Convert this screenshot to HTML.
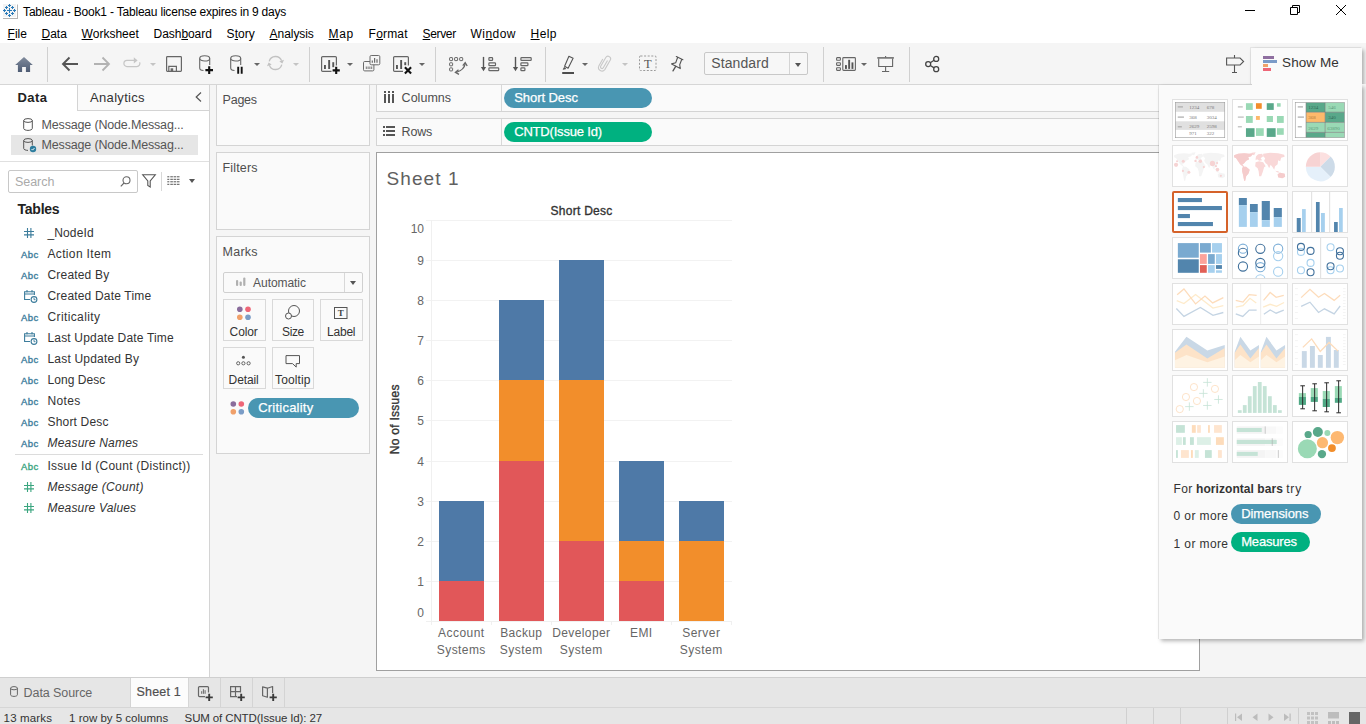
<!DOCTYPE html>
<html><head><meta charset="utf-8"><title>Tableau - Book1</title>
<style>
*{box-sizing:border-box;margin:0;padding:0}
html,body{width:1366px;height:724px;overflow:hidden;background:#fff;font-family:"Liberation Sans",sans-serif;color:#333}
.a{position:absolute}
.t{position:absolute;white-space:nowrap;line-height:1}
#titlebar{left:0;top:0;width:1366px;height:43px;background:#fff}
#toolbar{left:0;top:43px;width:1366px;height:41px;background:#f5f5f5}
#main{left:0;top:84px;width:1366px;height:593px;background:#f5f5f5}
#left{left:0;top:84px;width:210px;height:593px;background:#fff;border-right:1px solid #d4d4d4;border-top:1px solid #d4d4d4}
.card{position:absolute;background:#fafafa;border:1px solid #d4d4d4}
.ct{font-size:13px;color:#4e4e4e}
#viz{left:376px;top:152px;width:824px;height:519px;background:#fff;border:1px solid #a0a0a0}
#tabs{left:0;top:677px;width:1366px;height:30px;background:#e6e6e6;border-top:1px solid #cfcfcf}
#status{left:0;top:707px;width:1366px;height:17px;background:#e6e6e6}
#showme{left:1159px;top:85px;width:203px;height:554px;background:#fafafa;box-shadow:2px 2px 4px rgba(0,0,0,.3),-1px 0 0 rgba(0,0,0,.07)}
.pill{position:absolute;border-radius:10px;color:#fff;font-size:13px;height:20px;line-height:20px;padding-left:10.600px;white-space:nowrap;-webkit-text-stroke:0.250px #fff}
.dim{background:#4996b2}.mea{background:#00b180}
.fld{font-size:13px;color:#333}
.it{font-style:italic}
.abc{font-size:10px;color:#4e79a7;font-weight:bold;letter-spacing:-0.3px}
.th{position:absolute;width:56px;height:42px;background:#fff;border:1px solid #e1e1e1;overflow:hidden}

.mn{position:absolute;top:27px;font-size:12px;color:#000;white-space:nowrap;line-height:14px}
.mn u{text-decoration:underline;text-underline-offset:1px}
.sep{position:absolute;top:47px;width:1px;height:35px;background:#d0d0d0}
.ic{position:absolute;overflow:visible}
.dd{position:absolute;width:0;height:0;border-left:3px solid transparent;border-right:3px solid transparent;border-top:3px solid #666}
.dd.dis{border-top-color:#c4c4c4}

.f{position:absolute;left:47.500px;font-size:12px;line-height:14px;color:#333;white-space:nowrap}
.abcd,.abcm{position:absolute;left:21px;font-size:9.500px;line-height:12px;white-space:nowrap}
.abcd{color:#3d7d9c;-webkit-text-stroke:0.350px #3d7d9c}.abcm{color:#3aa57f;-webkit-text-stroke:0.350px #3aa57f}

.mb{position:absolute;width:43px;height:42px;border:1px solid #d9d9d9;background:#fafafa}
.ml{position:absolute;font-size:12px;line-height:14px;color:#333;white-space:nowrap;text-align:center}
.ax{position:absolute;font-size:12px;line-height:14px;color:#666;white-space:nowrap}
.gl{position:absolute;left:426px;width:306px;height:1px;background:#f2f2f2}
</style></head><body>
<div class="a" id="titlebar"></div>
<div class="a" id="toolbar"></div>
<!--TITLE-->
<svg class="ic" style="left:3px;top:4px" width="16" height="16" viewBox="0 0 16 16"><rect x="0" y="0" width="13" height="13" fill="#f3f3f3"></rect><path d="M14.500 0.500v14.500M0 14.500h15" stroke="#b4b4b4" stroke-width="1" fill="none"></path><g fill="#2b7bb9"><rect x="4" y="6" width="5" height="1"></rect><rect x="6" y="4" width="1" height="5"></rect><rect x="5" y="1" width="3" height="1"></rect><rect x="6" y="0" width="1" height="3"></rect><rect x="5" y="11" width="3" height="1"></rect><rect x="6" y="10" width="1" height="3"></rect><rect x="0" y="6" width="3" height="1"></rect><rect x="1" y="5" width="1" height="3"></rect><rect x="10" y="6" width="3" height="1"></rect><rect x="11" y="5" width="1" height="3"></rect><rect x="2" y="3" width="3" height="1"></rect><rect x="3" y="2" width="1" height="3"></rect><rect x="8" y="3" width="3" height="1"></rect><rect x="9" y="2" width="1" height="3"></rect><rect x="2" y="9" width="3" height="1"></rect><rect x="3" y="8" width="1" height="3"></rect><rect x="8" y="9" width="3" height="1"></rect><rect x="9" y="8" width="1" height="3"></rect></g></svg>
<div class="t" style="left: 23.1px; top: 5px; font-size: 12px; line-height: 14px; color: rgb(0, 0, 0); letter-spacing: -0.2px;">Tableau - Book1 - Tableau license expires in 9 days</div>
<svg class="ic" style="left:1240px;top:0" width="126" height="22" viewBox="0 0 126 22" fill="none" stroke="#000" stroke-width="1">
<path d="M5 10.5h10"></path>
<path d="M50.5 7.5h7v7h-7z M52.5 7.5v-2h7v7h-2"></path>
<path d="M96 5l10 10M106 5l-10 10"></path>
</svg>
<div class="mn" style="left: 7.6px; letter-spacing: -0.04px;"><u>F</u>ile</div>
<div class="mn" style="left: 41.6px; letter-spacing: -0.04px;"><u>D</u>ata</div>
<div class="mn" style="left: 81.6px; letter-spacing: 0.01px;"><u>W</u>orksheet</div>
<div class="mn" style="left: 153.6px; letter-spacing: -0.06px;">Dash<u>b</u>oard</div>
<div class="mn" style="left: 226.6px; letter-spacing: 0.03px;">S<u>t</u>ory</div>
<div class="mn" style="left: 269.6px; letter-spacing: -0.06px;"><u>A</u>nalysis</div>
<div class="mn" style="left: 328.6px; letter-spacing: 0.61px;"><u>M</u>ap</div>
<div class="mn" style="left: 368.6px; letter-spacing: 0.19px;">F<u>o</u>rmat</div>
<div class="mn" style="left: 422.6px; letter-spacing: -0.36px;"><u>S</u>erver</div>
<div class="mn" style="left: 470.6px; letter-spacing: 0.42px;">Wi<u>n</u>dow</div>
<div class="mn" style="left: 530.6px; letter-spacing: 0.38px;"><u>H</u>elp</div>

<!-- home -->
<svg class="ic" style="left:15px;top:57px" width="18" height="15" viewBox="0 0 18 15"><defs><linearGradient id="hg" x1="0" y1="0" x2="0" y2="1"><stop offset="0" stop-color="#808b9c"></stop><stop offset="1" stop-color="#4e5c74"></stop></linearGradient></defs><path d="M9 0L0.200 8h2.700V15h4.200V10h3.800V15h4.200V8h2.700z" fill="url(#hg)"></path></svg>
<div class="sep" style="left:47px"></div>
<!-- back -->
<svg class="ic" style="left:61px;top:56px" width="18" height="16" viewBox="0 0 18 16" fill="none" stroke="#555" stroke-width="1.9"><path d="M17 8H2M8.500 1.500L2 8l6.500 6.500"></path></svg>
<!-- fwd -->
<svg class="ic" style="left:93px;top:56px" width="18" height="16" viewBox="0 0 18 16" fill="none" stroke="#b2b2b2" stroke-width="1.800"><path d="M1 8h15M9.500 1.500L16 8l-6.500 6.500"></path></svg>
<!-- redo -->
<svg class="ic" style="left:123px;top:57px" width="18" height="11" viewBox="0 0 18 11" fill="none" stroke="#c6c6c6" stroke-width="1.200"><path d="M13.500 3.400H4a3.100 3.100 0 0 0 0 6.200h9.800a3.100 3.100 0 0 0 2.800-4.400"></path><path d="M10.800 0.300L14.600 3.400 10.800 6.500z" fill="#c6c6c6" stroke="none"></path></svg>
<div class="dd dis" style="left:150px;top:63px"></div>
<!-- save -->
<svg class="ic" style="left:166px;top:56px" width="16" height="16" viewBox="0 0 16 16" fill="none" stroke="#666" stroke-width="1.200"><rect x="0.600" y="0.600" width="14.800" height="14.800" rx="0.800"></rect><path d="M2.800 15.400v-5h7.600v5"></path><rect x="4.600" y="12.300" width="2.600" height="3" fill="#666" stroke="none"></rect></svg>
<!-- add ds -->
<svg class="ic" style="left:199px;top:55px" width="16" height="20" viewBox="0 0 16 20" fill="none" stroke="#666" stroke-width="1.100"><ellipse cx="5.700" cy="3.400" rx="5" ry="2.600"></ellipse><path d="M0.700 3.400v9.500c0 1.400 1.500 2.400 3.800 2.600M10.700 3.400v6.600"></path><path d="M10.200 11.300v7.600M6.400 15.100h7.600" stroke="#111" stroke-width="2.100"></path></svg>
<!-- pause ds -->
<svg class="ic" style="left:230px;top:55px" width="14" height="20" viewBox="0 0 14 20" fill="none" stroke="#666" stroke-width="1.100"><ellipse cx="5.700" cy="3.400" rx="5" ry="2.600"></ellipse><path d="M0.700 3.400v9.500c0 1.400 1.500 2.400 3.800 2.600M10.700 3.400v6.600"></path><path d="M8.200 11.800v7M11.700 11.800v7" stroke="#111" stroke-width="1.900"></path></svg>
<div class="dd" style="left:254px;top:63px"></div>
<!-- refresh -->
<svg class="ic" style="left:267px;top:55px" width="18" height="17" viewBox="0 0 18 17" fill="none" stroke="#c2c2c2" stroke-width="1.300"><path d="M2.200 6.300A6.500 6.500 0 0 1 14.600 5.800M14.800 9.700A6.500 6.500 0 0 1 2.400 10.200"></path><path d="M15.400 8.400L17 4.800 12.300 6.400zM1.600 7.600L0 11.200 4.700 9.600z" fill="#c2c2c2" stroke="none"></path></svg>
<div class="dd dis" style="left:293px;top:63px"></div>
<div class="sep" style="left:309px"></div>
<!-- new ws -->
<svg class="ic" style="left:321px;top:56px" width="20" height="19" viewBox="0 0 20 19" fill="none" stroke="#666" stroke-width="1.200"><path d="M10.500 15.400H1.600a1 1 0 0 1-1-1V1.600a1 1 0 0 1 1-1H14.400a1 1 0 0 1 1 1V9.500"></path><g fill="#555" stroke="none"><rect x="3" y="9" width="1.900" height="4"></rect><rect x="7.200" y="4" width="1.900" height="9"></rect><rect x="11.300" y="6.200" width="1.900" height="5"></rect></g><path d="M15.200 10.800v7.200M11.600 14.400h7.200" stroke="#111" stroke-width="2.100"></path></svg>
<div class="dd" style="left:347px;top:63px"></div>
<!-- duplicate -->
<svg class="ic" style="left:363px;top:55px" width="18" height="17" viewBox="0 0 18 17" fill="none" stroke="#6a6a6a" stroke-width="1"><rect x="7" y="0.500" width="9.800" height="9.300" rx="1.200"></rect><path d="M7 6.500H1.700a1.200 1.200 0 0 0-1.200 1.200v7a1.200 1.200 0 0 0 1.200 1.200h8a1.200 1.200 0 0 0 1.200-1.200V9.800"></path><path d="M9.300 7.800V5.500M11.600 7.800V3M14 7.800V4.300" stroke-width="1.200"></path><path d="M3.300 14V11.500M5.100 14V11.500M6.900 14V11.500M8.700 14V11.500" stroke-width="0.900"></path></svg>
<!-- clear -->
<svg class="ic" style="left:393px;top:56px" width="20" height="19" viewBox="0 0 20 19" fill="none" stroke="#666" stroke-width="1.200"><path d="M10 15.400H1.600a1 1 0 0 1-1-1V1.600a1 1 0 0 1 1-1H14.400a1 1 0 0 1 1 1V9.500"></path><g fill="#555" stroke="none"><rect x="3" y="9" width="1.900" height="4"></rect><rect x="7.200" y="4" width="1.900" height="9"></rect><rect x="11.300" y="6.200" width="1.900" height="3"></rect></g><path d="M11.900 11.200l6.200 6.400M18.100 11.200l-6.200 6.400" stroke="#111" stroke-width="2.100"></path></svg>
<div class="dd" style="left:419px;top:63px"></div>
<div class="sep" style="left:435px"></div>
<!-- swap -->
<svg class="ic" style="left:449px;top:57px" width="19" height="18" viewBox="0 0 19 18" fill="none" stroke="#666" stroke-width="1"><rect x="0.600" y="0.600" width="3" height="3" rx="0.500"></rect><rect x="5.600" y="0.600" width="3" height="3" rx="0.500"></rect><rect x="10.700" y="0.600" width="3" height="3" rx="0.500"></rect><rect x="0.600" y="5.800" width="3" height="3" rx="0.500"></rect><rect x="0.600" y="10.900" width="3" height="3" rx="0.500"></rect><path d="M16.200 6.500Q15.300 13 7.200 15.300" stroke-width="1.300"></path><path d="M13.800 8.600L16.200 5.600 18.200 9M9.500 12.800L6.400 15.400 10 17.400" stroke-width="1.300"></path></svg>
<!-- sort asc -->
<svg class="ic" style="left:480px;top:56px" width="20" height="16" viewBox="0 0 20 16" fill="none" stroke="#666" stroke-width="1.200"><path d="M3.500 0.900V12" stroke="#555" stroke-width="1.400"></path><path d="M0.900 11L6.100 11 3.500 15.200z" fill="#555" stroke="none"></path><rect x="8.900" y="1.700" width="3.700" height="2.700" rx="0.700"></rect><rect x="8.900" y="6.900" width="6.600" height="2.700" rx="0.700"></rect><rect x="8.900" y="11.900" width="9.800" height="2.700" rx="0.700"></rect></svg>
<!-- sort desc -->
<svg class="ic" style="left:512px;top:56px" width="20" height="16" viewBox="0 0 20 16" fill="none" stroke="#666" stroke-width="1.200"><path d="M3.500 0.900V12" stroke="#555" stroke-width="1.400"></path><path d="M0.900 11L6.100 11 3.500 15.200z" fill="#555" stroke="none"></path><rect x="8.900" y="1.700" width="10.300" height="2.700" rx="0.700"></rect><rect x="8.900" y="6.900" width="7" height="2.700" rx="0.700"></rect><rect x="8.900" y="11.900" width="4" height="2.700" rx="0.700"></rect></svg>
<div class="sep" style="left:545px"></div>
<!-- highlight -->
<svg class="ic" style="left:561px;top:55px" width="14" height="20" viewBox="0 0 14 20" fill="none" stroke="#555" stroke-width="1.100" stroke-linejoin="round"><path d="M7.900 1.300L12.100 3.300 7.100 13.200 3.600 11.200z"></path><path d="M3.200 12.300L2.100 14.400 5 13.700z" fill="#555" stroke-width="0.600"></path><path d="M1.200 18h11.800" stroke="#444" stroke-width="1.900"></path></svg>
<div class="dd" style="left:582px;top:63px"></div>
<!-- clip -->
<svg class="ic" style="left:598px;top:55px" width="14" height="18" viewBox="0 0 14 18" fill="none" stroke="#c8c8c8" stroke-width="1.100"><path d="M9.500 5.500L5.300 12.800a1.500 1.500 0 0 1-2.600-1.500L7.800 2.500a2.600 2.600 0 0 1 4.500 2.600L6.800 14.600a3.500 3.500 0 0 1-6-3.500l4-7"></path></svg>
<div class="dd dis" style="left:622px;top:63px"></div>
<!-- T box -->
<svg class="ic" style="left:639px;top:55px" width="18" height="17" viewBox="0 0 18 17" fill="none"><rect x="0.500" y="1" width="16.500" height="14.500" rx="1" stroke-dasharray="2 1.600" stroke="#9a9a9a"></rect><text x="8.800" y="13" font-family="Liberation Serif,serif" font-size="12.500" fill="#555" text-anchor="middle">T</text></svg>
<!-- pin -->
<svg class="ic" style="left:670px;top:55px" width="14" height="18" viewBox="0 0 14 18" fill="none" stroke="#555" stroke-width="1.100" stroke-linejoin="round" stroke-linecap="round"><path d="M6.300 1.600L12.900 4.800"></path><path d="M7.600 2.500L5.700 7.800 1.600 8.900 10.300 13.600 9.700 9.700 11.700 4.500"></path><path d="M5.700 11.300L3 15.900" stroke-width="1.300"></path></svg>
<!-- standard -->
<div class="a" style="left:704px;top:52px;width:104px;height:23px;border:1px solid #c8c8c8;border-radius:2px;background:#f7f7f7"></div>
<div class="a" style="left:789px;top:53px;width:1px;height:21px;background:#d4d4d4"></div>
<div class="t" style="left: 711.3px; top: 56px; font-size: 14px; color: rgb(85, 85, 85); letter-spacing: 0.08px;">Standard</div>
<div class="dd" style="left:795px;top:63px;border-left-width:3.500px;border-right-width:3.500px;border-top-width:4px;border-top-color:#555"></div>
<div class="sep" style="left:823px"></div>
<!-- show cards -->
<svg class="ic" style="left:836px;top:57px" width="20" height="14" viewBox="0 0 20 14" fill="none" stroke="#666" stroke-width="1.100"><rect x="0.600" y="0.600" width="3.800" height="2.700" rx="0.600"></rect><rect x="0.600" y="5.700" width="3.800" height="2.700" rx="0.600"></rect><rect x="0.600" y="10.700" width="3.800" height="2.700" rx="0.600"></rect><rect x="6.800" y="0.600" width="12.600" height="12.800" rx="0.800"></rect><g fill="#555" stroke="none"><rect x="9" y="8.100" width="1.900" height="3.800"></rect><rect x="12.200" y="2.800" width="1.900" height="9.100"></rect><rect x="15.500" y="5.400" width="1.900" height="6.500"></rect></g></svg>
<div class="dd" style="left:860.500px;top:63px"></div>
<!-- presentation -->
<svg class="ic" style="left:877px;top:56px" width="18" height="17" viewBox="0 0 18 17" fill="none" stroke="#666" stroke-width="1.100"><path d="M0.300 1.900h16.600" stroke-width="1.500"></path><path d="M8.600 0v1.500M1.700 2.500v8h13.900v-8M8.600 10.500v5M5 15.500h7.200"></path></svg>
<div class="sep" style="left:909px"></div>
<!-- share -->
<svg class="ic" style="left:924px;top:55px" width="16" height="18" viewBox="0 0 16 18" fill="none" stroke="#444" stroke-width="1.300"><circle cx="4.200" cy="9.100" r="2.500"></circle><circle cx="12.200" cy="3.900" r="2.500"></circle><circle cx="12.200" cy="14.200" r="2.500"></circle><path d="M6.300 7.700l3.800-2.400M6.300 10.500l3.800 2.400"></path></svg>
<!-- guide -->
<svg class="ic" style="left:1226px;top:55px" width="19" height="19" viewBox="0 0 19 19" fill="none" stroke="#555" stroke-width="1.100"><path d="M8.500 0v3M0.600 3h13.500l3.500 3.500-3.500 3.500H0.600zM8.500 10v7.500M6 17.500h5"></path></svg>
<!-- show me tab -->
<div class="a" style="left:1251px;top:48px;width:111px;height:37px;background:#fafafa;box-shadow:2px 2px 4px rgba(0,0,0,.3),-1px -1px 0 rgba(0,0,0,.06)"></div>
<div class="a" style="left:1263px;top:56px;width:11px;height:3px;background:#8f6fa0"></div>
<div class="a" style="left:1263px;top:60px;width:14px;height:3px;background:#7b9bc8"></div>
<div class="a" style="left:1263px;top:64px;width:5px;height:3px;background:#f0a26a"></div>
<div class="a" style="left:1263px;top:68px;width:8px;height:3px;background:#ee6677"></div>
<div class="t" style="left: 1282.1px; top: 56px; font-size: 13.5px; color: rgb(51, 51, 51); letter-spacing: 0.06px;">Show Me</div>

<div class="a" id="main"></div>
<div class="a" id="left"></div>

<!--LEFT-->
<div class="a" style="left:77px;top:84px;width:132px;height:27px;background:#fafafa;border-left:1px solid #d4d4d4;border-bottom:1px solid #d4d4d4"></div>
<div class="t" style="left: 17.6px; top: 90px; font-size: 13px; line-height: 15px; font-weight: bold; color: rgb(34, 34, 34); letter-spacing: 0.38px;">Data</div>
<div class="t" style="left: 90.1px; top: 90px; font-size: 13px; line-height: 15px; color: rgb(51, 51, 51); letter-spacing: 0.31px;">Analytics</div>
<svg class="ic" style="left:195px;top:92px" width="7" height="10" viewBox="0 0 7 10" fill="none" stroke="#555" stroke-width="1.200"><path d="M6 0.500L1.200 5 6 9.500"></path></svg>
<div class="a" style="left:11px;top:135px;width:187px;height:20px;background:#e6e6e6"></div>
<svg class="ic" style="left:23px;top:118px" width="10" height="13" viewBox="0 0 10 13" fill="none" stroke="#555" stroke-width="1"><ellipse cx="5" cy="2.500" rx="4.300" ry="1.900"></ellipse><path d="M0.700 2.500v8c0 1 1.900 1.900 4.300 1.900s4.300-0.900 4.300-1.900v-8"></path></svg>
<svg class="ic" style="left:23px;top:138px" width="14" height="15" viewBox="0 0 14 15" fill="none" stroke="#555" stroke-width="1"><ellipse cx="5" cy="2.500" rx="4.300" ry="1.900"></ellipse><path d="M0.700 2.500v8c0 1 1.900 1.900 4.300 1.900M9.300 2.500v5"></path><circle cx="10" cy="11" r="3.200" fill="#2d7d9e" stroke="none"></circle><path d="M8.500 11l1.100 1.100 1.900-2.100" stroke="#fff" stroke-width="0.900"></path></svg>
<div class="t" style="left: 41.6px; top: 118px; font-size: 12.5px; line-height: 14px; color: rgb(85, 85, 85); letter-spacing: -0.17px;">Message (Node.Messag...</div>
<div class="t" style="left: 41.6px; top: 138px; font-size: 12.5px; line-height: 14px; color: rgb(85, 85, 85); letter-spacing: -0.17px;">Message (Node.Messag...</div>
<div class="a" style="left:0;top:161px;width:209px;height:1px;background:#e0e0e0"></div>
<div class="a" style="left:8px;top:170px;width:130px;height:23px;border:1px solid #c8c8c8;border-radius:2px;background:#fff"></div>
<div class="t" style="left: 15.1px; top: 175px; font-size: 12.5px; line-height: 14px; color: rgb(170, 170, 170); letter-spacing: -0.07px;">Search</div>
<svg class="ic" style="left:120px;top:176px" width="11" height="11" viewBox="0 0 11 11" fill="none" stroke="#666" stroke-width="1.100"><circle cx="6.500" cy="4.300" r="3.500"></circle><path d="M4 7L0.800 10.300"></path></svg>
<svg class="ic" style="left:142px;top:174px" width="14" height="14" viewBox="0 0 14 14" fill="none" stroke="#555" stroke-width="1.100"><path d="M0.700 0.800h12.600L8.200 7v6l-2.400-1.500V7z"></path></svg>
<div class="a" style="left:161px;top:172px;width:1px;height:19px;background:#d8d8d8"></div>
<svg class="ic" style="left:167px;top:176px" width="13" height="10" viewBox="0 0 13 10" fill="none" stroke="#555" stroke-width="1"><path d="M0.300 0.800h2M0.300 3.300h2M0.300 5.800h2M0.300 8.300h2"></path><path d="M3.300 0.800h9.300M3.300 3.300h9.300M3.300 5.800h9.300M3.300 8.300h9.300" stroke-dasharray="2.600 0.700"></path></svg>
<div class="dd" style="left:189px;top:179px;border-left-width:3.500px;border-right-width:3.500px;border-top-width:4px;border-top-color:#555"></div>
<div class="t" style="left: 17.6px; top: 201px; font-size: 14px; line-height: 16px; font-weight: bold; color: rgb(34, 34, 34); letter-spacing: -0.27px;">Tables</div>
<svg class="ic" style="left:24px;top:228px" width="10" height="10" viewBox="0 0 10 10" fill="none" stroke="#3d7d9c" stroke-width="1.100"><path d="M3.500 0v10M6.900 0v10M0 3.500h10M0 6.900h10"></path></svg>
<div class="f" style="top: 225.8px; letter-spacing: 0.12px;">_NodeId</div>
<div class="abcd" style="top: 248.5px; letter-spacing: 0.38px;">Abc</div>
<div class="f" style="top: 246.8px; letter-spacing: 0.34px;">Action Item</div>
<div class="abcd" style="top: 269.5px; letter-spacing: 0.38px;">Abc</div>
<div class="f" style="top: 267.8px; letter-spacing: 0.18px;">Created By</div>
<svg class="ic" style="left:24px;top:289.5px" width="14" height="13" viewBox="0 0 14 13" fill="none" stroke="#3d7d9c" stroke-width="1.100"><path d="M6 9.500H0.600V1.700h9.800V5M0.600 4h9.800M3 0v2.500M8 0v2.500"></path><circle cx="10" cy="9.500" r="2.900"></circle><path d="M10 7.800v1.900h1.500" stroke-width="0.900"></path></svg>
<div class="f" style="top: 288.8px; letter-spacing: 0.18px;">Created Date Time</div>
<div class="abcd" style="top: 311.5px; letter-spacing: 0.38px;">Abc</div>
<div class="f" style="top: 309.8px; letter-spacing: 0.38px;">Criticality</div>
<svg class="ic" style="left:24px;top:331.5px" width="14" height="13" viewBox="0 0 14 13" fill="none" stroke="#3d7d9c" stroke-width="1.100"><path d="M6 9.500H0.600V1.700h9.800V5M0.600 4h9.800M3 0v2.500M8 0v2.500"></path><circle cx="10" cy="9.500" r="2.900"></circle><path d="M10 7.800v1.900h1.500" stroke-width="0.900"></path></svg>
<div class="f" style="top: 330.8px; letter-spacing: 0.17px;">Last Update Date Time</div>
<div class="abcd" style="top: 353.5px; letter-spacing: 0.38px;">Abc</div>
<div class="f" style="top: 351.8px; letter-spacing: 0.19px;">Last Updated By</div>
<div class="abcd" style="top: 374.5px; letter-spacing: 0.38px;">Abc</div>
<div class="f" style="top: 372.8px; letter-spacing: 0.05px;">Long Desc</div>
<div class="abcd" style="top: 395.5px; letter-spacing: 0.38px;">Abc</div>
<div class="f" style="top: 393.8px; letter-spacing: 0.37px;">Notes</div>
<div class="abcd" style="top: 416.5px; letter-spacing: 0.38px;">Abc</div>
<div class="f" style="top: 414.8px; letter-spacing: 0.18px;">Short Desc</div>
<div class="abcd" style="top: 437.5px; letter-spacing: 0.38px;">Abc</div>
<div class="f it" style="top: 435.8px; letter-spacing: 0.21px;">Measure Names</div>
<div class="a" style="left:15px;top:454px;width:188px;height:1px;background:#dcdcdc"></div>
<div class="abcm" style="top: 461px; letter-spacing: 0.38px;">Abc</div>
<div class="f" style="top: 459.3px; letter-spacing: 0.26px;">Issue Id (Count (Distinct))</div>
<svg class="ic" style="left:24px;top:482px" width="10" height="10" viewBox="0 0 10 10" fill="none" stroke="#3aa57f" stroke-width="1.100"><path d="M3.500 0v10M6.900 0v10M0 3.500h10M0 6.900h10"></path></svg>
<div class="f it" style="top: 480.3px; letter-spacing: 0.28px;">Message (Count)</div>
<svg class="ic" style="left:24px;top:503px" width="10" height="10" viewBox="0 0 10 10" fill="none" stroke="#3aa57f" stroke-width="1.100"><path d="M3.500 0v10M6.900 0v10M0 3.500h10M0 6.900h10"></path></svg>
<div class="f it" style="top: 501.3px; letter-spacing: 0.18px;">Measure Values</div>
<!--CARDS-->
<div class="card" style="left:216px;top:84px;width:154px;height:62px"></div>
<div class="card" style="left:216px;top:152px;width:154px;height:78px"></div>
<div class="card" style="left:216px;top:236px;width:154px;height:218px"></div>
<div class="card" style="left:376px;top:84px;width:986px;height:28px"></div>
<div class="card" style="left:376px;top:118px;width:986px;height:28px"></div>

<div class="t ct" style="left: 222.6px; top: 93px; font-size: 12.5px; line-height: 14px; letter-spacing: -0.25px;">Pages</div>
<div class="t ct" style="left: 222.6px; top: 161px; font-size: 12.5px; line-height: 14px; letter-spacing: 0.14px;">Filters</div>
<div class="t ct" style="left: 222.6px; top: 245px; font-size: 12.5px; line-height: 14px; letter-spacing: 0.23px;">Marks</div>
<!-- marks dropdown -->
<div class="a" style="left:223px;top:272px;width:140px;height:21px;border:1px solid #d0d0d0;border-radius:2px;background:#fafafa"></div>
<div class="a" style="left:344px;top:273px;width:1px;height:19px;background:#d8d8d8"></div>
<svg class="ic" style="left:236px;top:277px" width="10" height="10" viewBox="0 0 10 10" fill="#b0b0b0"><rect x="0" y="3" width="2.200" height="6" rx="1"></rect><rect x="3.600" y="4.500" width="2.200" height="4.500" rx="1"></rect><rect x="7.200" y="0.500" width="2.200" height="8.500" rx="1"></rect></svg>
<div class="t" style="left: 253.1px; top: 276px; font-size: 12px; line-height: 14px; color: rgb(85, 85, 85); letter-spacing: -0.06px;">Automatic</div>
<div class="dd" style="left:349.500px;top:281px;border-left-width:3.500px;border-right-width:3.500px;border-top-width:4px;border-top-color:#555"></div>
<!-- marks buttons -->
<div class="mb" style="left:223px;top:299px"></div>
<div class="mb" style="left:272px;top:299px;width:42px"></div>
<div class="mb" style="left:320px;top:299px"></div>
<div class="mb" style="left:223px;top:347px"></div>
<div class="mb" style="left:272px;top:347px;width:42px"></div>
<svg class="ic" style="left:236px;top:306px" width="16" height="15" viewBox="0 0 16 15"><circle cx="3.800" cy="3.300" r="2.800" fill="#8a6d9c"></circle><circle cx="12" cy="3.300" r="2.800" fill="#ee6677"></circle><circle cx="3.800" cy="11.200" r="2.800" fill="#f0a06a"></circle><circle cx="12" cy="11.200" r="2.800" fill="#7a9cc6"></circle></svg>
<svg class="ic" style="left:285px;top:305px" width="16" height="15" viewBox="0 0 16 15" fill="none" stroke="#555" stroke-width="1"><circle cx="9" cy="6" r="5.500"></circle><circle cx="3.500" cy="11" r="3" fill="#fafafa"></circle></svg>
<svg class="ic" style="left:334px;top:307px" width="14" height="12" viewBox="0 0 14 12" fill="none" stroke="#555" stroke-width="1"><rect x="0.500" y="0.500" width="12.500" height="11"></rect><text x="6.800" y="9.300" font-family="Liberation Serif,serif" font-size="9" font-weight="bold" fill="#444" stroke="none" text-anchor="middle">T</text></svg>
<svg class="ic" style="left:236px;top:355px" width="15" height="11" viewBox="0 0 15 11" fill="none" stroke="#555" stroke-width="0.900"><circle cx="7.400" cy="2.300" r="1.500" fill="#555" stroke="none"></circle><circle cx="2.200" cy="8.300" r="1.600"></circle><circle cx="7.400" cy="8.300" r="1.600"></circle><circle cx="12.600" cy="8.300" r="1.600"></circle></svg>
<svg class="ic" style="left:285px;top:355px" width="16" height="13" viewBox="0 0 16 13" fill="none" stroke="#555" stroke-width="1"><path d="M1 0.600h13.500v8h-3.300v3.500l-3.700-3.500H1z"></path></svg>
<div class="ml" style="left: 229.6px; top: 325px; letter-spacing: -0.1px;">Color</div>
<div class="ml" style="left: 282.1px; top: 325px; letter-spacing: -0.39px;">Size</div>
<div class="ml" style="left: 327.1px; top: 325px; letter-spacing: -0.24px;">Label</div>
<div class="ml" style="left: 228.6px; top: 373px; letter-spacing: -0.11px;">Detail</div>
<div class="ml" style="left: 275.1px; top: 373px; letter-spacing: 0.12px;">Tooltip</div>
<svg class="ic" style="left:230px;top:401px" width="15" height="14" viewBox="0 0 15 14"><circle cx="3.300" cy="3" r="2.800" fill="#8a6d9c"></circle><circle cx="11.300" cy="3" r="2.800" fill="#ee6677"></circle><circle cx="3.300" cy="10.700" r="2.800" fill="#f0a06a"></circle><circle cx="11.300" cy="10.700" r="2.800" fill="#7a9cc6"></circle></svg>
<div class="pill dim" style="left:248px;top:398px;width:111px"><span style="position: relative; left: -0.4px; letter-spacing: 0.22px;">Criticality</span></div>
<!-- shelves -->
<svg class="ic" style="left:384px;top:91px" width="10" height="12" viewBox="0 0 10 12" fill="#555"><rect x="0" y="0" width="2" height="2"></rect><rect x="4" y="0" width="2" height="2"></rect><rect x="8" y="0" width="2" height="2"></rect><rect x="0" y="3" width="2" height="9"></rect><rect x="4" y="3" width="2" height="9"></rect><rect x="8" y="3" width="2" height="9"></rect></svg>
<svg class="ic" style="left:383px;top:126px" width="12" height="10" viewBox="0 0 12 10" fill="#555"><rect x="0" y="0" width="2" height="2"></rect><rect x="0" y="4" width="2" height="2"></rect><rect x="0" y="8" width="2" height="2"></rect><rect x="3" y="0" width="9" height="2"></rect><rect x="3" y="4" width="9" height="2"></rect><rect x="3" y="8" width="9" height="2"></rect></svg>
<div class="t ct" style="left: 401.6px; top: 91px; font-size: 12.5px; line-height: 14px; letter-spacing: 0.02px;">Columns</div>
<div class="t ct" style="left: 401.6px; top: 125px; font-size: 12.5px; line-height: 14px; letter-spacing: -0.19px;">Rows</div>
<div class="a" style="left:501px;top:85px;width:1px;height:26px;background:#d8d8d8"></div>
<div class="a" style="left:501px;top:119px;width:1px;height:26px;background:#d8d8d8"></div>
<div class="pill dim" style="left:504px;top:88px;width:148px"><span style="position: relative; left: -0.4px; letter-spacing: -0.06px;">Short Desc</span></div>
<div class="pill mea" style="left:504px;top:122px;width:148px"><span style="position: relative; left: -0.4px; letter-spacing: -0.19px;">CNTD(Issue Id)</span></div>
<div class="a" id="viz"></div>
<div class="t" style="left: 386.6px; top: 168px; font-size: 19px; line-height: 22px; color: rgb(96, 96, 96); letter-spacing: 1.07px;">Sheet 1</div>
<div class="t" style="left: 550.6px; top: 204px; font-size: 12px; line-height: 14px; color: rgb(51, 51, 51); -webkit-text-stroke: 0.35px rgb(51, 51, 51); letter-spacing: 0.26px;">Short Desc</div>
<div class="gl" style="top:581px"></div>
<div class="gl" style="top:541px"></div>
<div class="gl" style="top:501px"></div>
<div class="gl" style="top:461px"></div>
<div class="gl" style="top:420px"></div>
<div class="gl" style="top:380px"></div>
<div class="gl" style="top:340px"></div>
<div class="gl" style="top:300px"></div>
<div class="gl" style="top:260px"></div>
<div class="gl" style="top:220px"></div>
<div class="a" style="left:426px;top:621px;width:306px;height:1px;background:#f0f0f0"></div>
<div class="a" style="left:431px;top:220px;width:1px;height:405px;background:#f0f0f0"></div>
<div class="a" style="left:491px;top:621px;width:1px;height:4px;background:#f0f0f0"></div>
<div class="a" style="left:551px;top:621px;width:1px;height:4px;background:#f0f0f0"></div>
<div class="a" style="left:611px;top:621px;width:1px;height:4px;background:#f0f0f0"></div>
<div class="a" style="left:671px;top:621px;width:1px;height:4px;background:#f0f0f0"></div>
<div class="a" style="left:731px;top:621px;width:1px;height:4px;background:#f0f0f0"></div>
<div class="ax" style="right:942px;top:605.6px">0</div>
<div class="ax" style="right:942px;top:574.5px">1</div>
<div class="ax" style="right:942px;top:534.5px">2</div>
<div class="ax" style="right:942px;top:494.5px">3</div>
<div class="ax" style="right:942px;top:454.5px">4</div>
<div class="ax" style="right:942px;top:413.5px">5</div>
<div class="ax" style="right:942px;top:373.5px">6</div>
<div class="ax" style="right:942px;top:333.5px">7</div>
<div class="ax" style="right:942px;top:293.5px">8</div>
<div class="ax" style="right:942px;top:253.5px">9</div>
<div class="ax" style="right:942px;top:222.4px">10</div>
<div class="a" style="left:439px;top:581px;width:45px;height:40px;background:#e15759"></div>
<div class="a" style="left:439px;top:501px;width:45px;height:80px;background:#4e79a7"></div>
<div class="a" style="left:499px;top:461px;width:45px;height:160px;background:#e15759"></div>
<div class="a" style="left:499px;top:380px;width:45px;height:81px;background:#f28e2b"></div>
<div class="a" style="left:499px;top:300px;width:45px;height:80px;background:#4e79a7"></div>
<div class="a" style="left:559px;top:541px;width:45px;height:80px;background:#e15759"></div>
<div class="a" style="left:559px;top:380px;width:45px;height:161px;background:#f28e2b"></div>
<div class="a" style="left:559px;top:260px;width:45px;height:120px;background:#4e79a7"></div>
<div class="a" style="left:619px;top:581px;width:45px;height:40px;background:#e15759"></div>
<div class="a" style="left:619px;top:541px;width:45px;height:40px;background:#f28e2b"></div>
<div class="a" style="left:619px;top:461px;width:45px;height:80px;background:#4e79a7"></div>
<div class="a" style="left:679px;top:541px;width:45px;height:80px;background:#f28e2b"></div>
<div class="a" style="left:679px;top:501px;width:45px;height:40px;background:#4e79a7"></div>
<div class="ax" style="left:421.5px;width:80px;text-align:center;top:626px"><span style="display: inline-block; margin-left: -0.4px; letter-spacing: 0.48px;">Account</span></div>
<div class="ax" style="left:421.5px;width:80px;text-align:center;top:642.700px"><span style="display: inline-block; margin-left: -0.4px; letter-spacing: 0.41px;">Systems</span></div>
<div class="ax" style="left:481.5px;width:80px;text-align:center;top:626px"><span style="display: inline-block; margin-left: -0.4px; letter-spacing: 0.36px;">Backup</span></div>
<div class="ax" style="left:481.5px;width:80px;text-align:center;top:642.700px"><span style="display: inline-block; margin-left: -0.4px; letter-spacing: 0.48px;">System</span></div>
<div class="ax" style="left:541.5px;width:80px;text-align:center;top:626px"><span style="display: inline-block; margin-left: -0.4px; letter-spacing: 0.39px;">Developer</span></div>
<div class="ax" style="left:541.5px;width:80px;text-align:center;top:642.700px"><span style="display: inline-block; margin-left: -0.4px; letter-spacing: 0.48px;">System</span></div>
<div class="ax" style="left:601.5px;width:80px;text-align:center;top:626px"><span style="display: inline-block; margin-left: -0.4px; letter-spacing: 0.35px;">EMI</span></div>
<div class="ax" style="left:661.5px;width:80px;text-align:center;top:626px"><span style="display: inline-block; margin-left: -0.4px; letter-spacing: 0.46px;">Server</span></div>
<div class="ax" style="left:661.5px;width:80px;text-align:center;top:642.700px"><span style="display: inline-block; margin-left: -0.4px; letter-spacing: 0.48px;">System</span></div>
<div class="t" style="left:393.700px;top:419px;transform:translate(-50%,-50%) rotate(-90deg)"><div style="font-size: 12px; line-height: 14px; color: rgb(51, 51, 51); -webkit-text-stroke: 0.35px rgb(51, 51, 51); display: inline-block; margin-left: -0.4px; letter-spacing: 0.27px;">No of Issues</div></div>

<div class="a" id="tabs"></div>
<div class="a" id="status"></div>

<!--TABS-->
<svg class="ic" style="left:10px;top:686px" width="8" height="11" viewBox="0 0 8 11" fill="none" stroke="#666" stroke-width="1"><ellipse cx="4" cy="2.200" rx="3.400" ry="1.600"></ellipse><path d="M0.600 2.200v6.600c0 0.900 1.500 1.600 3.400 1.600s3.400-0.700 3.400-1.600V2.200"></path></svg>
<div class="t" style="left: 23.6px; top: 686px; font-size: 12.5px; line-height: 14px; color: rgb(102, 102, 102); letter-spacing: -0.08px;">Data Source</div>
<div class="a" style="left:130px;top:678px;width:59px;height:29px;background:#fcfcfc;border-left:1px solid #d4d4d4;border-right:1px solid #d6d6d6"></div>
<div class="t" style="left: 136.6px; top: 685px; font-size: 12.5px; line-height: 14px; color: rgb(80, 80, 80); -webkit-text-stroke: 0.2px rgb(80, 80, 80); letter-spacing: 0.16px;">Sheet 1</div>
<div class="a" style="left:220px;top:678px;width:1px;height:29px;background:#d4d4d4"></div>
<div class="a" style="left:252px;top:678px;width:1px;height:29px;background:#d4d4d4"></div>
<div class="a" style="left:284px;top:678px;width:1px;height:29px;background:#d4d4d4"></div>
<svg class="ic" style="left:198px;top:686px" width="16" height="16" viewBox="0 0 16 16" fill="none" stroke="#666" stroke-width="1.200"><path d="M7 10.600H1.500a1 1 0 0 1-1-1V1.600a1 1 0 0 1 1-1H9.500a1 1 0 0 1 1 1V6.500"></path><path d="M3.700 7.800V5.200M5.400 7.800V3.200M7.100 7.800V4.200" stroke-width="1"></path><path d="M11.200 7.800v7.200M7.600 11.400h7.200" stroke="#3a3a3a" stroke-width="1.900"></path></svg>
<svg class="ic" style="left:230px;top:686px" width="16" height="16" viewBox="0 0 16 16" fill="none" stroke="#666" stroke-width="1.200"><path d="M7 10.600H0.600V0.600H10.500V6.500M0.600 5.600H10.500M5.500 0.600V10.600"></path><path d="M11.200 7.800v7.200M7.600 11.400h7.200" stroke="#3a3a3a" stroke-width="1.900"></path></svg>
<svg class="ic" style="left:262px;top:686px" width="16" height="16" viewBox="0 0 16 16" fill="none" stroke="#666" stroke-width="1.200" stroke-linejoin="round"><path d="M0.600 0.800L5.400 2.200V11.200L0.600 9.700ZM5.400 2.200L10.600 0.500V7"></path><path d="M11.200 7.800v7.200M7.600 11.400h7.200" stroke="#3a3a3a" stroke-width="1.900"></path></svg>
<div class="a" style="left:0;top:707px;width:1366px;height:1px;background:#d6d6d6"></div>
<div class="t" style="left: 3.6px; top: 712px; font-size: 11.5px; line-height: 13px; color: rgb(51, 51, 51); letter-spacing: 0.16px;">13 marks</div>
<div class="t" style="left: 69.1px; top: 712px; font-size: 11.5px; line-height: 13px; color: rgb(51, 51, 51);">1 row by 5 columns</div>
<div class="t" style="left: 184.6px; top: 712px; font-size: 11.5px; line-height: 13px; color: rgb(51, 51, 51); letter-spacing: -0.13px;">SUM of CNTD(Issue Id): 27</div>
<div class="a" style="left:1126px;top:708px;width:1px;height:16px;background:#d0d0d0"></div>
<div class="a" style="left:1153px;top:708px;width:1px;height:16px;background:#d0d0d0"></div>
<div class="a" style="left:1180px;top:708px;width:1px;height:16px;background:#d0d0d0"></div>
<div class="a" style="left:1227px;top:708px;width:1px;height:16px;background:#d0d0d0"></div>
<div class="a" style="left:1298px;top:708px;width:1px;height:16px;background:#d0d0d0"></div>
<svg class="ic" style="left:1235px;top:713px" width="57" height="9" viewBox="0 0 57 9" fill="#bcbcbc"><rect x="0" y="0.500" width="1.200" height="7.500"></rect><path d="M7 0.500v7.500L2 4.250z"></path><path d="M22.500 0.500v7.500L17.500 4.250z"></path><path d="M33.500 0.500v7.500L38.500 4.250z"></path><path d="M49 0.500v7.500L54 4.250z"></path><rect x="54.500" y="0.500" width="1.200" height="7.500"></rect></svg>
<svg class="ic" style="left:1306px;top:712px" width="56" height="12" viewBox="0 0 56 12"><g fill="#c2c2c2"><rect x="1" y="0" width="3" height="3"></rect><rect x="5" y="0" width="3" height="3"></rect><rect x="9" y="0" width="3" height="3"></rect><rect x="1" y="4.500" width="3" height="3"></rect><rect x="5" y="4.500" width="3" height="3"></rect><rect x="9" y="4.500" width="3" height="3"></rect><rect x="1" y="9" width="3" height="3"></rect><rect x="5" y="9" width="3" height="3"></rect><rect x="9" y="9" width="3" height="3"></rect></g><g fill="#bdbdbd"><rect x="22" y="0" width="11" height="6.500"></rect><rect x="22" y="9" width="3" height="3"></rect><rect x="26" y="9" width="3" height="3"></rect><rect x="30" y="9" width="3" height="3"></rect></g><rect x="43" y="0" width="11" height="12" fill="#666"></rect></svg>
<div class="a" style="left:0;top:84px;width:1252px;height:1px;background:#d6d6d6"></div>
<div class="a" id="showme"></div>
<div class="a" style="left:1252px;top:80px;width:110px;height:8px;background:#fafafa"></div>
<!--SM0--><div class="th" style="left:1172px;top:99px"><svg class="ic" style="left:-1px;top:-1px" width="56" height="42" viewBox="0 0 56 42"><g transform="translate(0.150,0.300)"><rect x="3.2" y="3.2" width="49.4" height="9.3" fill="#e0e0e0"></rect><rect x="3.2" y="22.0" width="49.4" height="8.6" fill="#e0e0e0"></rect><rect x="3.2" y="3.2" width="49.4" height="35.2" fill="none" stroke="#999" stroke-width="0.6"></rect><rect x="5.6" y="7.0" width="5.2" height="1.2" fill="#aaa"></rect><rect x="5.6" y="17.2" width="6.2" height="1.2" fill="#aaa"></rect><rect x="5.6" y="26.9" width="4.1" height="1.2" fill="#aaa"></rect><text x="17.0" y="9.6" font-family="Liberation Serif,serif" font-size="5" fill="#777">1234</text><text x="34.5" y="9.6" font-family="Liberation Serif,serif" font-size="5" fill="#777">678</text><text x="17.0" y="19.4" font-family="Liberation Serif,serif" font-size="5" fill="#777">368</text><text x="34.5" y="19.4" font-family="Liberation Serif,serif" font-size="5" fill="#777">3034</text><text x="17.0" y="28.5" font-family="Liberation Serif,serif" font-size="5" fill="#777">2629</text><text x="34.5" y="28.5" font-family="Liberation Serif,serif" font-size="5" fill="#777">2598</text><text x="17.0" y="36.2" font-family="Liberation Serif,serif" font-size="5" fill="#777">971</text><text x="34.5" y="36.2" font-family="Liberation Serif,serif" font-size="5" fill="#777">322</text></g></svg></div>
<div class="th" style="left:1232px;top:99px"><svg class="ic" style="left:-1px;top:-1px" width="56" height="42" viewBox="0 0 56 42"><g transform="translate(0.150,0.300)"><rect x="5.7" y="7.0" width="4.9" height="1.2" fill="#bbb"></rect><rect x="5.7" y="17.2" width="5.9" height="1.2" fill="#bbb"></rect><rect x="5.7" y="26.9" width="4.0" height="1.2" fill="#bbb"></rect><rect x="13.8" y="3.9" width="6.8" height="6.7" fill="#9ad9b5"></rect><rect x="23.8" y="3.9" width="5.8" height="5.6" fill="#f28e2b"></rect><rect x="34.6" y="3.9" width="7.0" height="6.7" fill="#59a88a"></rect><rect x="44.8" y="3.9" width="3.7" height="3.5" fill="#9ad9b5"></rect><rect x="13.8" y="16.7" width="6.8" height="6.9" fill="#9ad9b5"></rect><rect x="23.8" y="16.7" width="3.9" height="3.9" fill="#fdb96b"></rect><rect x="34.6" y="16.7" width="6.2" height="6.0" fill="#9ad9b5"></rect><rect x="44.8" y="16.7" width="6.8" height="6.9" fill="#9ad9b5"></rect><rect x="13.8" y="28.9" width="8.6" height="8.7" fill="#59a88a"></rect><rect x="23.8" y="28.9" width="7.8" height="7.7" fill="#9ad9b5"></rect><rect x="34.6" y="28.9" width="8.9" height="8.7" fill="#59a88a"></rect><rect x="44.8" y="28.9" width="6.8" height="6.6" fill="#9ad9b5"></rect></g></svg></div>
<div class="th" style="left:1292px;top:99px"><svg class="ic" style="left:-1px;top:-1px" width="56" height="42" viewBox="0 0 56 42"><g transform="translate(0.150,0.300)"><rect x="13.9" y="3.2" width="19.1" height="9.7" fill="#59a88a"></rect><rect x="33.0" y="3.2" width="19.4" height="9.7" fill="#9ad9b5"></rect><rect x="13.9" y="12.9" width="19.1" height="10.2" fill="#fdb96b"></rect><rect x="33.0" y="12.9" width="19.4" height="10.2" fill="#59a88a"></rect><rect x="13.9" y="23.1" width="19.1" height="10.0" fill="#9ad9b5"></rect><rect x="33.0" y="23.1" width="19.4" height="10.0" fill="#9ad9b5"></rect><rect x="13.9" y="33.1" width="19.1" height="5.3" fill="#59a88a"></rect><rect x="33.0" y="33.1" width="19.4" height="5.3" fill="#9ad9b5"></rect><path d="M13.900 3.200v35.200M33 3.200v35.200M13.900 12.900h38.500M13.900 23.100h38.500M13.900 33.100h38.500" stroke="#777" stroke-width="0.600" fill="none"></path><rect x="3.1" y="3.2" width="49.3" height="35.2" fill="none" stroke="#999" stroke-width="0.6"></rect><rect x="5.6" y="7.0" width="5.2" height="1.2" fill="#aaa"></rect><rect x="5.6" y="17.2" width="6.2" height="1.2" fill="#aaa"></rect><rect x="5.6" y="26.9" width="4.1" height="1.2" fill="#aaa"></rect><text x="16.0" y="10.0" font-family="Liberation Serif,serif" font-size="5" fill="#2f6b55">1234</text><text x="36.0" y="10.0" font-family="Liberation Serif,serif" font-size="5" fill="#5a9a7a">546</text><text x="16.0" y="20.2" font-family="Liberation Serif,serif" font-size="5" fill="#b07a3a">368</text><text x="36.0" y="20.2" font-family="Liberation Serif,serif" font-size="5" fill="#2f6b55">340</text><text x="16.0" y="30.3" font-family="Liberation Serif,serif" font-size="5" fill="#5a9a7a">2629</text><text x="35.0" y="30.3" font-family="Liberation Serif,serif" font-size="5" fill="#5a9a7a">63890</text></g></svg></div>
<div class="th" style="left:1172px;top:145px"><svg class="ic" style="left:-1px;top:-1px" width="56" height="42" viewBox="0 0 56 42"><g transform="translate(0.150,0.300)"><path d="M2 10L6 8.500L12 8L17 8.500L21 8L19 11L16 12L17 14L14 15.500L12 18L10 19.500L12 21L11 21.500L8 19L6 16L4 13L2 12ZM19.500 7.500L23.500 7L22 10L20 9.500ZM11 21.500L14 21.500L17.500 24.500L16.500 28L14 31L13 35.500L12 35.500L11 30L10 26L10 23ZM24 11L26 9L30 8.500L31 11L28.500 13L30 15L27 15.500L25 14L23.500 15L23.500 13ZM23.500 17L27 16L31 17L33.500 21L32 22L30.500 27L29 31L27 31L26.500 26L25.500 23L23 21ZM31 8.500L38 7.500L46 8L52 9.500L52.500 11.500L49 12.500L48 16L46 15L45.500 19L43 21L42 24.500L40.500 22L38.500 19.500L37 23L35 19L33.500 18L32 15.500L33 13L31 11ZM43 25.500L46 26L48 27.500L45 27ZM45.500 29L48 27.500L52.500 28.500L53 31.500L50 33L46 32Z" fill="#f4f4f4"></path><circle cx="24.8" cy="12.1" r="1.3" fill="#f6d3d3"></circle><circle cx="28.2" cy="15.9" r="1.8" fill="#f6d3d3"></circle><circle cx="23.4" cy="15.6" r="1.2" fill="#f6d3d3"></circle><circle cx="40.3" cy="18.1" r="2.6" fill="#f6d3d3"></circle><circle cx="44.9" cy="17.7" r="1.1" fill="#f6d3d3"></circle><circle cx="43.8" cy="20.9" r="1.1" fill="#f6d3d3"></circle><circle cx="45.3" cy="24.3" r="1.8" fill="#f6d3d3"></circle><circle cx="31.7" cy="21.8" r="1.1" fill="#f6d3d3"></circle><circle cx="4.9" cy="15.9" r="1.0" fill="#f6d3d3"></circle><circle cx="3.9" cy="19.5" r="2.1" fill="#f6d3d3"></circle><circle cx="11.1" cy="15.9" r="1.5" fill="#f6d3d3"></circle><circle cx="10.8" cy="25.6" r="1.1" fill="#f6d3d3"></circle><circle cx="16.7" cy="27.0" r="1.5" fill="#f6d3d3"></circle><circle cx="48.7" cy="30.5" r="1.1" fill="#f6d3d3"></circle></g></svg></div>
<div class="th" style="left:1232px;top:145px"><svg class="ic" style="left:-1px;top:-1px" width="56" height="42" viewBox="0 0 56 42"><g transform="translate(0.150,0.300)"><path d="M2 10L6 8.500L12 8L17 8.500L21 8L19 11L16 12L17 14L14 15.500L12 18L10 19.500L12 21L11 21.500L8 19L6 16L4 13L2 12ZM19.500 7.500L23.500 7L22 10L20 9.500ZM11 21.500L14 21.500L17.500 24.500L16.500 28L14 31L13 35.500L12 35.500L11 30L10 26L10 23ZM24 11L26 9L30 8.500L31 11L28.500 13L30 15L27 15.500L25 14L23.500 15L23.500 13ZM23.500 17L27 16L31 17L33.500 21L32 22L30.500 27L29 31L27 31L26.500 26L25.500 23L23 21ZM31 8.500L38 7.500L46 8L52 9.500L52.500 11.500L49 12.500L48 16L46 15L45.500 19L43 21L42 24.500L40.500 22L38.500 19.500L37 23L35 19L33.500 18L32 15.500L33 13L31 11ZM43 25.500L46 26L48 27.500L45 27ZM45.500 29L48 27.500L52.500 28.500L53 31.500L50 33L46 32Z" fill="#f9d8d8"></path><path d="M2 10L6 8.500L12 8L17 8.500L21 8L19 11L16 12L17 14L14 15.500L12 18L10 19.500L12 21L11 21.500L8 19L6 16L4 13L2 12ZM11 21.500L14 21.500L17.500 24.500L16.500 28L14 31L13 35.500L12 35.500L11 30L10 26L10 23ZM45.500 29L48 27.500L52.500 28.500L53 31.500L50 33L46 32Z" fill="#f5cccc"></path></g></svg></div>
<div class="th" style="left:1292px;top:145px"><svg class="ic" style="left:-1px;top:-1px" width="56" height="42" viewBox="0 0 56 42"><g transform="translate(0.150,0.300)"><path d="M28.2 21.4L28.20 6.90A14.5 14.5 0 0 1 38.45 11.15z" fill="#fce0e0"></path><path d="M28.2 21.4L38.45 11.15A14.5 14.5 0 0 1 38.45 31.65z" fill="#cddbe8"></path><path d="M28.2 21.4L38.45 31.65A14.5 14.5 0 0 1 13.70 21.40z" fill="#e5f0fa"></path><path d="M28.2 21.4L13.70 21.40A14.5 14.5 0 0 1 28.20 6.90z" fill="#f7d3d3"></path></g></svg></div>
<div class="th" style="left:1172px;top:191px;border:2px solid #d5622a;border-radius:2px"><svg class="ic" style="left:-2px;top:-2px" width="56" height="42" viewBox="0 0 56 42"><g transform="translate(0.150,0.300)"><rect x="5.7" y="6.7" width="24.1" height="4.1" fill="#5285ad"></rect><rect x="5.7" y="14.7" width="44.1" height="4.1" fill="#5285ad"></rect><rect x="5.7" y="22.7" width="12.1" height="4.1" fill="#5285ad"></rect><rect x="5.7" y="30.7" width="35.1" height="4.1" fill="#5285ad"></rect></g></svg></div>
<div class="th" style="left:1232px;top:191px"><svg class="ic" style="left:-1px;top:-1px" width="56" height="42" viewBox="0 0 56 42"><g transform="translate(0.150,0.300)"><rect x="6.7" y="6.7" width="8.0" height="7.2" fill="#5285ad"></rect><rect x="6.7" y="13.9" width="8.0" height="21.7" fill="#a6d0ee"></rect><rect x="17.8" y="12.7" width="7.8" height="8.2" fill="#5285ad"></rect><rect x="17.8" y="20.9" width="7.8" height="14.7" fill="#a6d0ee"></rect><rect x="29.6" y="9.7" width="8.1" height="19.2" fill="#5285ad"></rect><rect x="29.6" y="28.9" width="8.1" height="6.7" fill="#a6d0ee"></rect><rect x="41.6" y="16.7" width="8.1" height="9.2" fill="#5285ad"></rect><rect x="41.6" y="25.9" width="8.1" height="9.7" fill="#a6d0ee"></rect></g></svg></div>
<div class="th" style="left:1292px;top:191px"><svg class="ic" style="left:-1px;top:-1px" width="56" height="42" viewBox="0 0 56 42"><g transform="translate(0.150,0.300)"><path d="M19.500 0v42M37.500 0v42" stroke="#d0d0d0" stroke-width="0.700"></path><rect x="4.6" y="26.7" width="4.0" height="14.3" fill="#5285ad"></rect><rect x="9.9" y="17.8" width="3.7" height="23.2" fill="#a6d0ee"></rect><rect x="23.8" y="10.7" width="3.7" height="30.3" fill="#5285ad"></rect><rect x="28.8" y="21.7" width="3.9" height="19.3" fill="#a6d0ee"></rect><rect x="41.9" y="30.7" width="3.7" height="10.3" fill="#5285ad"></rect><rect x="46.9" y="16.7" width="3.7" height="24.3" fill="#a6d0ee"></rect></g></svg></div>
<div class="th" style="left:1172px;top:237px"><svg class="ic" style="left:-1px;top:-1px" width="56" height="42" viewBox="0 0 56 42"><g transform="translate(0.150,0.300)"><rect x="5.7" y="5.8" width="20.9" height="14.6" fill="#7aaad0"></rect><rect x="5.7" y="22.0" width="20.9" height="13.5" fill="#5285ad"></rect><rect x="27.8" y="5.8" width="10.9" height="9.5" fill="#7aaad0"></rect><rect x="39.9" y="5.8" width="9.9" height="9.5" fill="#a6d0ee"></rect><rect x="27.8" y="16.8" width="6.8" height="9.8" fill="#fca39b"></rect><rect x="35.9" y="16.8" width="6.7" height="9.8" fill="#7aaad0"></rect><rect x="43.8" y="16.8" width="6.0" height="9.8" fill="#a6d0ee"></rect><rect x="27.8" y="27.8" width="6.8" height="7.7" fill="#e15f56"></rect><rect x="35.9" y="27.8" width="6.7" height="7.7" fill="#a6d0ee"></rect><rect x="43.8" y="27.8" width="6.0" height="3.8" fill="#5285ad"></rect><rect x="43.8" y="33.0" width="6.0" height="2.5" fill="#a6d0ee"></rect></g></svg></div>
<div class="th" style="left:1232px;top:237px"><svg class="ic" style="left:-1px;top:-1px" width="56" height="42" viewBox="0 0 56 42"><g transform="translate(0.150,0.300)"><circle cx="10.8" cy="11.4" r="4.6" fill="none" stroke="#7fb0d8" stroke-width="1.1"></circle><circle cx="10.8" cy="15.6" r="4.6" fill="none" stroke="#41719c" stroke-width="1.1"></circle><circle cx="10.8" cy="29.2" r="4.6" fill="none" stroke="#41719c" stroke-width="1.1"></circle><circle cx="28.2" cy="11.5" r="4.6" fill="none" stroke="#41719c" stroke-width="1.1"></circle><circle cx="28.2" cy="29.9" r="4.6" fill="none" stroke="#7fb0d8" stroke-width="1.1"></circle><circle cx="28.2" cy="25.7" r="4.6" fill="none" stroke="#41719c" stroke-width="1.1"></circle><circle cx="28.2" cy="42.0" r="4.6" fill="none" stroke="#a6d0ee" stroke-width="1.1"></circle><circle cx="46.0" cy="11.4" r="4.6" fill="none" stroke="#7fb0d8" stroke-width="1.1"></circle><circle cx="46.0" cy="18.8" r="4.6" fill="none" stroke="#a6d0ee" stroke-width="1.1"></circle><circle cx="46.0" cy="34.4" r="4.6" fill="none" stroke="#a6d0ee" stroke-width="1.1"></circle></g></svg></div>
<div class="th" style="left:1292px;top:237px"><svg class="ic" style="left:-1px;top:-1px" width="56" height="42" viewBox="0 0 56 42"><g transform="translate(0.150,0.300)"><path d="M28.500 0v42" stroke="#d0d0d0" stroke-width="0.700"></path><circle cx="8.8" cy="14.6" r="3.5" fill="none" stroke="#a6d0ee" stroke-width="1.1"></circle><circle cx="8.8" cy="9.6" r="3.5" fill="none" stroke="#41719c" stroke-width="1.1"></circle><circle cx="18.4" cy="13.6" r="3.5" fill="none" stroke="#41719c" stroke-width="1.1"></circle><circle cx="18.4" cy="25.6" r="3.5" fill="none" stroke="#a6d0ee" stroke-width="1.1"></circle><circle cx="8.8" cy="33.0" r="3.5" fill="none" stroke="#a6d0ee" stroke-width="1.1"></circle><circle cx="18.4" cy="35.0" r="3.5" fill="none" stroke="#41719c" stroke-width="1.1"></circle><circle cx="38.4" cy="10.0" r="3.5" fill="none" stroke="#a6d0ee" stroke-width="1.1"></circle><circle cx="47.8" cy="14.0" r="3.5" fill="none" stroke="#41719c" stroke-width="1.1"></circle><circle cx="47.8" cy="18.5" r="3.5" fill="none" stroke="#41719c" stroke-width="1.1"></circle><circle cx="38.4" cy="33.0" r="3.5" fill="none" stroke="#a6d0ee" stroke-width="1.1"></circle><circle cx="38.4" cy="28.9" r="3.5" fill="none" stroke="#41719c" stroke-width="1.1"></circle><circle cx="47.8" cy="31.2" r="3.5" fill="none" stroke="#a6d0ee" stroke-width="1.1"></circle></g></svg></div>
<div class="th" style="left:1172px;top:283px"><svg class="ic" style="left:-1px;top:-1px" width="56" height="42" viewBox="0 0 56 42"><g transform="translate(0.150,0.300)"><polyline points="4.6,17.4 11.8,20.3 23.4,11.3 40.8,24.8 51.2,22.4" fill="none" stroke="#feebcb" stroke-width="1.3" stroke-linejoin="miter"></polyline><polyline points="5.0,11.5 11.8,5.6 23.4,20.6 32.8,12.7 40.5,19.6 51.2,14.3" fill="none" stroke="#fddcbb" stroke-width="1.3" stroke-linejoin="miter"></polyline><polyline points="4.2,25.2 11.8,33.1 28.2,24.1 40.8,32.1 51.2,29.2" fill="none" stroke="#c4d4e3" stroke-width="1.3" stroke-linejoin="miter"></polyline></g></svg></div>
<div class="th" style="left:1232px;top:283px"><svg class="ic" style="left:-1px;top:-1px" width="56" height="42" viewBox="0 0 56 42"><g transform="translate(0.150,0.300)"><path d="M28.500 0v42" stroke="#e4e4e4" stroke-width="0.700"></path><polyline points="3.6,17.1 10.8,18.8 17.1,11.3 24.5,12.0" fill="none" stroke="#fddcbb" stroke-width="1.3" stroke-linejoin="miter"></polyline><polyline points="3.6,23.8 10.8,22.4 17.8,15.0 24.1,19.6" fill="none" stroke="#feebcb" stroke-width="1.3" stroke-linejoin="miter"></polyline><polyline points="3.6,30.6 10.6,33.1 17.1,26.8 24.5,26.8" fill="none" stroke="#c4d4e3" stroke-width="1.3" stroke-linejoin="miter"></polyline><polyline points="31.4,17.1 38.0,9.2 44.0,14.0 51.6,12.0" fill="none" stroke="#fddcbb" stroke-width="1.3" stroke-linejoin="miter"></polyline><polyline points="31.0,23.8 38.0,21.0 44.4,23.1 51.9,19.2" fill="none" stroke="#feebcb" stroke-width="1.3" stroke-linejoin="miter"></polyline><polyline points="31.7,31.0 38.0,26.6 44.0,29.9 51.6,26.8" fill="none" stroke="#c4d4e3" stroke-width="1.3" stroke-linejoin="miter"></polyline></g></svg></div>
<div class="th" style="left:1292px;top:283px"><svg class="ic" style="left:-1px;top:-1px" width="56" height="42" viewBox="0 0 56 42"><g transform="translate(0.150,0.300)"><path d="M2.800 5.3h3M2.800 11.3h3M2.800 17.2h3M2.800 23.2h3M2.800 29.2h3M2.800 35.2h3M50.800 5.3h2.700M50.800 8.3h2.700M50.800 11.3h2.700M50.800 14.3h2.700M50.800 17.3h2.700M50.800 20.2h2.700M50.800 23.2h2.700M50.800 26.2h2.700M50.800 29.2h2.700M50.800 32.2h2.700M50.800 35.2h2.700" stroke="#ececec" stroke-width="0.600"></path><polyline points="9.0,14.3 17.8,6.0 26.4,13.9 32.3,10.2 42.0,17.1 48.0,12.0" fill="none" stroke="#fddcbb" stroke-width="1.3" stroke-linejoin="miter"></polyline><polyline points="9.0,23.1 17.8,18.9 26.4,29.2 32.3,25.5 42.0,30.6 48.0,22.7" fill="none" stroke="#c4d4e3" stroke-width="1.3" stroke-linejoin="miter"></polyline></g></svg></div>
<div class="th" style="left:1172px;top:329px"><svg class="ic" style="left:-1px;top:-1px" width="56" height="42" viewBox="0 0 56 42"><g transform="translate(0.150,0.300)"><polygon points="2.8,22.5 14.3,7.5 35.2,21.1 52.6,15.6 52.6,38.5 2.8,38.5" fill="#c9d8e6"></polygon><polygon points="2.8,23.5 14.3,15.3 35.2,29.1 52.6,18.8 52.6,38.5 2.8,38.5" fill="#fde3c8"></polygon><polygon points="2.8,30.9 14.3,25.7 35.2,33.0 52.6,27.1 52.6,38.5 2.8,38.5" fill="#fef3e3"></polygon></g></svg></div>
<div class="th" style="left:1232px;top:329px"><svg class="ic" style="left:-1px;top:-1px" width="56" height="42" viewBox="0 0 56 42"><g transform="translate(0.150,0.300)"><polygon points="2.6,22.5 8.2,7.5 18.2,21.1 26.8,15.6 26.8,38.5 2.6,38.5" fill="#c9d8e6"></polygon><polygon points="2.6,23.5 8.2,15.3 18.2,29.1 26.8,18.8 26.8,38.5 2.6,38.5" fill="#fde3c8"></polygon><polygon points="2.6,30.9 8.2,25.7 18.2,33.0 26.8,27.1 26.8,38.5 2.6,38.5" fill="#fef3e3"></polygon><polygon points="28.7,22.5 34.3,7.5 44.3,21.1 52.9,15.6 52.9,38.5 28.7,38.5" fill="#c9d8e6"></polygon><polygon points="28.7,23.5 34.3,15.3 44.3,29.1 52.9,18.8 52.9,38.5 28.7,38.5" fill="#fde3c8"></polygon><polygon points="28.7,30.9 34.3,25.7 44.3,33.0 52.9,27.1 52.9,38.5 28.7,38.5" fill="#fef3e3"></polygon></g></svg></div>
<div class="th" style="left:1292px;top:329px"><svg class="ic" style="left:-1px;top:-1px" width="56" height="42" viewBox="0 0 56 42"><g transform="translate(0.150,0.300)"><path d="M2.800 5.3h3M2.800 11.3h3M2.800 17.2h3M2.800 23.2h3M2.800 29.2h3M2.800 35.2h3M50.800 5.3h2.700M50.800 8.3h2.700M50.800 11.3h2.700M50.800 14.3h2.700M50.800 17.3h2.700M50.800 20.2h2.700M50.800 23.2h2.700M50.800 26.2h2.700M50.800 29.2h2.700M50.800 32.2h2.700M50.800 35.2h2.700" stroke="#ececec" stroke-width="0.600"></path><rect x="9.7" y="21.8" width="4.9" height="16.7" fill="#c9d8e6"></rect><rect x="17.8" y="16.7" width="4.9" height="21.8" fill="#c9d8e6"></rect><rect x="25.7" y="25.7" width="4.9" height="12.8" fill="#c9d8e6"></rect><rect x="33.8" y="7.6" width="4.9" height="30.9" fill="#c9d8e6"></rect><rect x="41.7" y="20.7" width="4.9" height="17.8" fill="#c9d8e6"></rect><polyline points="10.7,18.1 19.5,9.6 28.1,22.1 36.9,13.2 45.9,21.8" fill="none" stroke="#fddcbb" stroke-width="1.3" stroke-linejoin="miter"></polyline></g></svg></div>
<div class="th" style="left:1172px;top:375px"><svg class="ic" style="left:-1px;top:-1px" width="56" height="42" viewBox="0 0 56 42"><g transform="translate(0.150,0.300)"><circle cx="21.8" cy="11.8" r="3.6" fill="none" stroke="#fddcbb" stroke-width="0.8"></circle><circle cx="42.8" cy="13.6" r="3.6" fill="none" stroke="#fddcbb" stroke-width="0.8"></circle><circle cx="13.8" cy="21.7" r="3.6" fill="none" stroke="#fddcbb" stroke-width="0.8"></circle><circle cx="24.8" cy="25.7" r="3.6" fill="none" stroke="#fddcbb" stroke-width="0.8"></circle><circle cx="7.6" cy="33.8" r="3.6" fill="none" stroke="#fddcbb" stroke-width="0.8"></circle><path d="M31.0 7.1h8.400M35.2 2.9v8.400M27.0 18.1h8.400M31.2 13.9v8.400M42.1 24.2h8.400M46.3 20.0v8.400M13.0 31.3h8.400M17.2 27.1v8.400M31.0 30.2h8.400M35.2 26.0v8.400" stroke="#c5e3d6" stroke-width="0.800" fill="none"></path></g></svg></div>
<div class="th" style="left:1232px;top:375px"><svg class="ic" style="left:-1px;top:-1px" width="56" height="42" viewBox="0 0 56 42"><g transform="translate(0.150,0.300)"><rect x="5.7" y="34.9" width="3.8" height="2.7" fill="#c5e3d6"></rect><rect x="10.7" y="29.8" width="3.8" height="7.8" fill="#c5e3d6"></rect><rect x="15.7" y="20.9" width="3.8" height="16.7" fill="#c5e3d6"></rect><rect x="20.7" y="10.8" width="3.8" height="26.8" fill="#c5e3d6"></rect><rect x="25.7" y="6.7" width="3.8" height="30.9" fill="#c5e3d6"></rect><rect x="30.7" y="10.8" width="3.8" height="26.8" fill="#c5e3d6"></rect><rect x="35.8" y="20.9" width="3.8" height="16.7" fill="#c5e3d6"></rect><rect x="40.8" y="29.8" width="3.8" height="7.8" fill="#c5e3d6"></rect><rect x="45.8" y="34.9" width="3.8" height="2.7" fill="#c5e3d6"></rect></g></svg></div>
<div class="th" style="left:1292px;top:375px"><svg class="ic" style="left:-1px;top:-1px" width="56" height="42" viewBox="0 0 56 42"><g transform="translate(0.150,0.300)"><rect x="6.7" y="17.8" width="7.1" height="3.9" fill="#9ad9b5"></rect><rect x="6.7" y="21.7" width="7.1" height="7.9" fill="#4fa884"></rect><path d="M10.5 10.5V33.5M8.2 10.5h4.600M8.2 33.5h4.600" stroke="#2a2a2a" stroke-width="1" fill="none"></path><rect x="18.6" y="12.8" width="7.1" height="8.9" fill="#9ad9b5"></rect><rect x="18.6" y="21.7" width="7.1" height="4.9" fill="#4fa884"></rect><path d="M22.5 8.5V35.5M20.2 8.5h4.600M20.2 35.5h4.600" stroke="#2a2a2a" stroke-width="1" fill="none"></path><rect x="30.6" y="15.7" width="7.1" height="7.9" fill="#9ad9b5"></rect><rect x="30.6" y="23.6" width="7.1" height="8.1" fill="#4fa884"></rect><path d="M34.5 7.5V36.5M32.2 7.5h4.600M32.2 36.5h4.600" stroke="#2a2a2a" stroke-width="1" fill="none"></path><rect x="42.7" y="10.8" width="7.0" height="11.9" fill="#9ad9b5"></rect><rect x="42.7" y="22.7" width="7.0" height="4.8" fill="#4fa884"></rect><path d="M46.5 5.5V37.5M44.2 5.5h4.600M44.2 37.5h4.600" stroke="#2a2a2a" stroke-width="1" fill="none"></path></g></svg></div>
<div class="th" style="left:1172px;top:421px"><svg class="ic" style="left:-1px;top:-1px" width="56" height="42" viewBox="0 0 56 42"><g transform="translate(0.150,0.300)"><rect x="3.9" y="3.8" width="8.8" height="7.7" fill="#c5e3d6"></rect><rect x="19.7" y="3.8" width="3.9" height="7.7" fill="#fddcbb"></rect><rect x="25.0" y="3.8" width="3.7" height="7.7" fill="#fee5cf"></rect><rect x="35.9" y="3.8" width="1.8" height="7.7" fill="#fddcbb"></rect><rect x="41.9" y="3.8" width="7.8" height="7.7" fill="#fee5cf"></rect><rect x="3.9" y="15.9" width="5.8" height="7.7" fill="#ddf0e7"></rect><rect x="10.8" y="15.9" width="2.8" height="7.7" fill="#c5e3d6"></rect><rect x="17.8" y="15.9" width="3.9" height="7.7" fill="#c5e3d6"></rect><rect x="24.8" y="15.9" width="13.9" height="7.7" fill="#ddf0e7"></rect><rect x="43.8" y="15.9" width="7.9" height="7.7" fill="#fddcbb"></rect><rect x="3.9" y="28.8" width="1.8" height="7.8" fill="#c5e3d6"></rect><rect x="8.8" y="28.8" width="7.9" height="7.8" fill="#fee5cf"></rect><rect x="18.8" y="28.8" width="1.9" height="7.8" fill="#fddcbb"></rect><rect x="22.7" y="28.8" width="3.9" height="7.8" fill="#ddf0e7"></rect><rect x="32.8" y="28.8" width="6.8" height="7.8" fill="#c5e3d6"></rect><rect x="45.8" y="28.8" width="3.9" height="7.8" fill="#fee5cf"></rect></g></svg></div>
<div class="th" style="left:1232px;top:421px"><svg class="ic" style="left:-1px;top:-1px" width="56" height="42" viewBox="0 0 56 42"><g transform="translate(0.150,0.300)"><rect x="4.6" y="5.1" width="28.4" height="7.4" fill="#f4f4f4"></rect><rect x="33.0" y="5.1" width="11.0" height="7.4" fill="#f8f8f8"></rect><rect x="44.0" y="5.1" width="6.6" height="7.4" fill="#fcfcfc"></rect><rect x="4.6" y="6.7" width="25.0" height="4.0" fill="#c5e3d6"></rect><path d="M33.1 5.1V12.5" stroke="#aaa" stroke-width="0.600"></path><rect x="4.6" y="17.0" width="28.4" height="7.6" fill="#f4f4f4"></rect><rect x="33.0" y="17.0" width="11.0" height="7.6" fill="#f8f8f8"></rect><rect x="44.0" y="17.0" width="6.6" height="7.6" fill="#fcfcfc"></rect><rect x="4.6" y="18.6" width="40.0" height="4.1" fill="#c5e3d6"></rect><path d="M40.1 17V24.6" stroke="#aaa" stroke-width="0.600"></path><rect x="4.6" y="28.8" width="28.4" height="7.8" fill="#f4f4f4"></rect><rect x="33.0" y="28.8" width="11.0" height="7.8" fill="#f8f8f8"></rect><rect x="44.0" y="28.8" width="6.6" height="7.8" fill="#fcfcfc"></rect><rect x="4.6" y="30.6" width="21.0" height="4.0" fill="#c5e3d6"></rect><path d="M46.2 28.8V36.6" stroke="#aaa" stroke-width="0.600"></path></g></svg></div>
<div class="th" style="left:1292px;top:421px"><svg class="ic" style="left:-1px;top:-1px" width="56" height="42" viewBox="0 0 56 42"><g transform="translate(0.150,0.300)"><circle cx="16.0" cy="13.2" r="3.6" fill="#59a88a"></circle><circle cx="25.7" cy="10.7" r="5.0" fill="#59a88a"></circle><circle cx="35.2" cy="11.7" r="3.0" fill="#9ad9b5"></circle><circle cx="45.2" cy="16.3" r="6.7" fill="#fdb871"></circle><circle cx="30.3" cy="21.4" r="5.6" fill="#fdb871"></circle><circle cx="39.8" cy="26.8" r="3.9" fill="#f28e2b"></circle><circle cx="15.2" cy="27.4" r="9.5" fill="#9ad9b5"></circle><circle cx="29.8" cy="32.8" r="4.2" fill="#59a88a"></circle></g></svg></div>
<div class="t" style="left:1174px;top:482px;font-size:12px;line-height:14px;color:#333"><span style="position: relative; left: -0.4px; letter-spacing: 0.3px;">For</span><span style="display:inline-block;width:3.600px"></span><b style="position: relative; left: -0.4px; letter-spacing: 0.05px;">horizontal bars</b><span style="display:inline-block;width:3.300px"></span><span style="position: relative; left: -0.4px; letter-spacing: 0.85px;">try</span></div>
<div class="t" style="left: 1173.6px; top: 509px; font-size: 12px; line-height: 14px; color: rgb(51, 51, 51); letter-spacing: 0.38px;">0 or more</div>
<div class="t" style="left: 1173.6px; top: 537px; font-size: 12px; line-height: 14px; color: rgb(51, 51, 51); letter-spacing: 0.38px;">1 or more</div>
<div class="pill dim" style="left:1231px;top:504px;width:90px"><span style="position: relative; left: -0.4px; letter-spacing: -0.07px;">Dimensions</span></div>
<div class="pill mea" style="left:1231px;top:532px;width:79px"><span style="position: relative; left: -0.4px; letter-spacing: -0.18px;">Measures</span></div>
<!--SM1-->

</body></html>
